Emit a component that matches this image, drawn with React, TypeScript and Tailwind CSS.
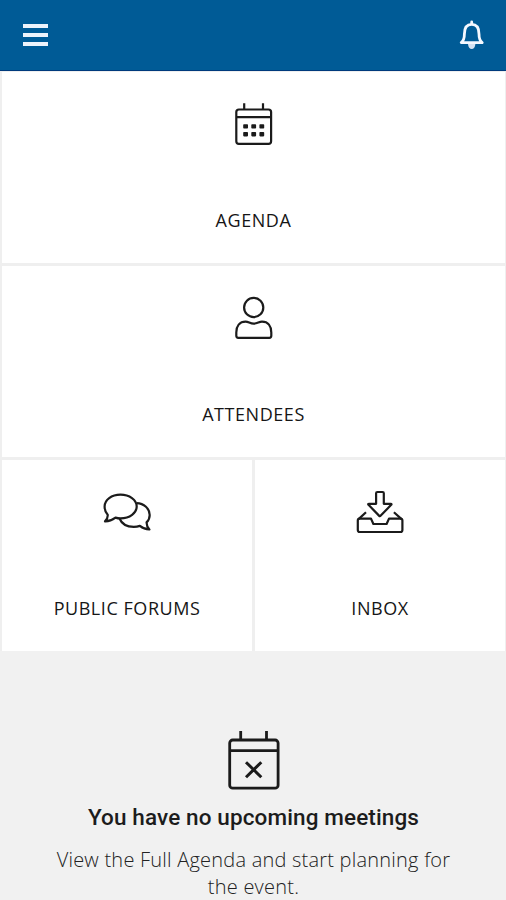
import React from "react";

type TileProps = {
    label: string,
    className?: string,
    children: React.ReactNode,
}

const BellIcon: React.FC = () => (
    <svg className="w-7 h-8" viewBox="0 0 28 32" fill="none" stroke="#f4f8ff" strokeWidth={2.8} strokeLinejoin="round" strokeLinecap="round">
        <path d="M13.7 3V4.5" />
        <path d="M3.2 23.6C5.9 21.5 6.4 19 6.4 15C6.4 9 8.6 5.4 13.7 5.4S21 9 21 15C21 19 21.5 21.5 24.2 23.6Z" />
        <path d="M10 25C10.4 28.6 11.6 30 13.7 30S17 28.6 17.4 25Z" fill="#d5e2f2" stroke="none" />
    </svg>
)

const CalendarIcon: React.FC = () => (
    <svg className="w-12 h-12" viewBox="0.8 0 48 48" fill="none" stroke="#1b1b1b" strokeWidth={2.2}>
        <rect x="7.1" y="9.5" width="34.8" height="34.3" rx="2.6" />
        <path d="M7.3 17.2H42M15 3.2V9.2M33.8 3.2V9.2" />
        <g fill="#1b1b1b" stroke="none">
            <rect x="14" y="24.2" width="4.8" height="4.4" rx="0.8" />
            <rect x="22.1" y="24.2" width="4.8" height="4.4" rx="0.8" />
            <rect x="30.2" y="24.2" width="4.8" height="4.4" rx="0.8" />
            <rect x="14" y="32" width="4.8" height="4.4" rx="0.8" />
            <rect x="22.1" y="32" width="4.8" height="4.4" rx="0.8" />
            <rect x="30.2" y="32" width="4.8" height="4.4" rx="0.8" />
        </g>
    </svg>
)

const PersonIcon: React.FC = () => (
    <svg className="w-12 h-12" viewBox="0.8 0 48 48" fill="none" stroke="#1b1b1b" strokeWidth={2.2}>
        <circle cx="24.5" cy="13.5" r="9.6" />
        <path d="M7.1 41.8V38.4C7.1 32.2 10.3 27.6 16.4 27.6C19.4 27.6 20.8 29.6 24.5 29.6S29.8 27.6 32.8 27.6C38.9 27.6 42.1 32.2 42.1 38.4V41.8A2 2 0 0 1 40.1 43.8H9.1A2 2 0 0 1 7.1 41.8Z" />
    </svg>
)

const ForumIcon: React.FC = () => (
    <svg className="w-12 h-12 overflow-visible" viewBox="0 0 48 48" fill="none" stroke="#1b1b1b" strokeWidth={2.2} strokeLinejoin="round">
        <path d="M2 33.4C4 31.5 4.9 29.5 4.7 26.8C2.6 24.6 1.6 22 1.6 18.5C1.6 11.8 8.5 6.7 17.5 6.7S33.7 11.8 33.7 18.4S26.8 30.4 17.5 30.4C15.8 30.4 14 30.1 12.5 29.6C9.5 31.9 6 33.5 2 33.4Z" />
        <path d="M33.6 15.2C41 15.4 46.7 20.5 46.7 27C46.7 30 45.7 32.3 43.6 34.4C43.5 37 44.4 39.3 46.4 41.4C42.6 41.5 39.5 40 36.9 37.9C35 38.5 33 38.8 30.8 38.8C24 38.8 18.6 35.6 16.5 30.5" />
    </svg>
)

const InboxIcon: React.FC = () => (
    <svg className="w-12 h-12 overflow-visible" viewBox="0.8 0 48 48" fill="none" stroke="#1b1b1b" strokeWidth={2.2} strokeLinejoin="round">
        <path d="M4.3 30.6H15.8L18.2 36H31.4L33.8 30.6H45.2Q47.2 30.6 47.2 32.6V42Q47.2 44 45.2 44H4.6Q2.6 44 2.6 42V32.6Q2.6 30.6 4.3 30.6Z" />
        <path d="M3.4 31.1L10.8 24.2M46.4 31.1L38.7 24.2" />
        <path d="M22.2 4H27.4Q28.6 4 28.6 5.2V15.8H35.6Q36.8 15.8 36 16.8L25.6 27.6Q24.7 28.5 23.8 27.6L13.3 16.8Q12.5 15.8 13.8 15.8H20.9V5.2Q20.9 4 22.2 4Z" />
    </svg>
)

const NoMeetingsIcon: React.FC = () => (
    <svg className="w-[60px] h-16" viewBox="0 0 60 64" fill="none" stroke="#1b1b1b" strokeWidth={2.8}>
        <rect x="6.7" y="12" width="48.4" height="48.2" rx="3" />
        <path d="M6.7 22.7H55.1M17.7 3V12M43.5 3V12" />
        <path d="M23 34.2L38.3 49.2M38.3 34.2L23 49.2" strokeWidth={3} />
    </svg>
)

const Tile: React.FC<TileProps> = ({ label, className = "", children }) => (
    <button className={`flex flex-col items-center bg-white h-[191px] pt-7 ${className}`}>
        {children}
        <span className="mt-[59px] text-[18px] leading-[27px] tracking-[0.55px] text-[#161616]">{label}</span>
    </button>
)

const App: React.FC = () => {
    return (
        <div className="w-full h-[900px] overflow-hidden flex flex-col bg-[#f1f1f1] font-['Open_Sans','Liberation_Sans',sans-serif]">
            <header className="shrink-0 h-[71px] flex items-center justify-between pl-[23px] pr-5 bg-[#005b96] border-b border-[#003a7c]">
                <button aria-label="Menu" className="flex flex-col gap-[5px]">
                    <span className="w-[25px] h-1 bg-[#edf3fb]" />
                    <span className="w-[25px] h-1 bg-[#edf3fb]" />
                    <span className="w-[25px] h-1 bg-[#edf3fb]" />
                </button>
                <button aria-label="Notifications">
                    <BellIcon />
                </button>
            </header>

            <main className="grid grid-cols-2 gap-[3px] pl-0.5 pr-px pt-px bg-[#efefef]">
                <Tile label="AGENDA" className="col-span-2">
                    <CalendarIcon />
                </Tile>
                <Tile label="ATTENDEES" className="col-span-2">
                    <PersonIcon />
                </Tile>
                <Tile label="PUBLIC FORUMS">
                    <ForumIcon />
                </Tile>
                <Tile label="INBOX">
                    <InboxIcon />
                </Tile>
            </main>

            <section className="flex flex-col items-center pt-[77px] text-center">
                <NoMeetingsIcon />
                <h2 className="mt-3 pl-px font-[Roboto,'Liberation_Sans',sans-serif] font-medium text-[22.5px] leading-[26px] tracking-[0.12px] text-[#1c1c1c]">
                    You have no upcoming meetings
                </h2>
                <p className="mt-4 pl-px w-[420px] text-[20px] leading-[27px] tracking-[0.22px] font-light text-[#222222]">
                    View the Full Agenda and start planning for the event.
                </p>
            </section>
        </div>
    )
}

export default App;
